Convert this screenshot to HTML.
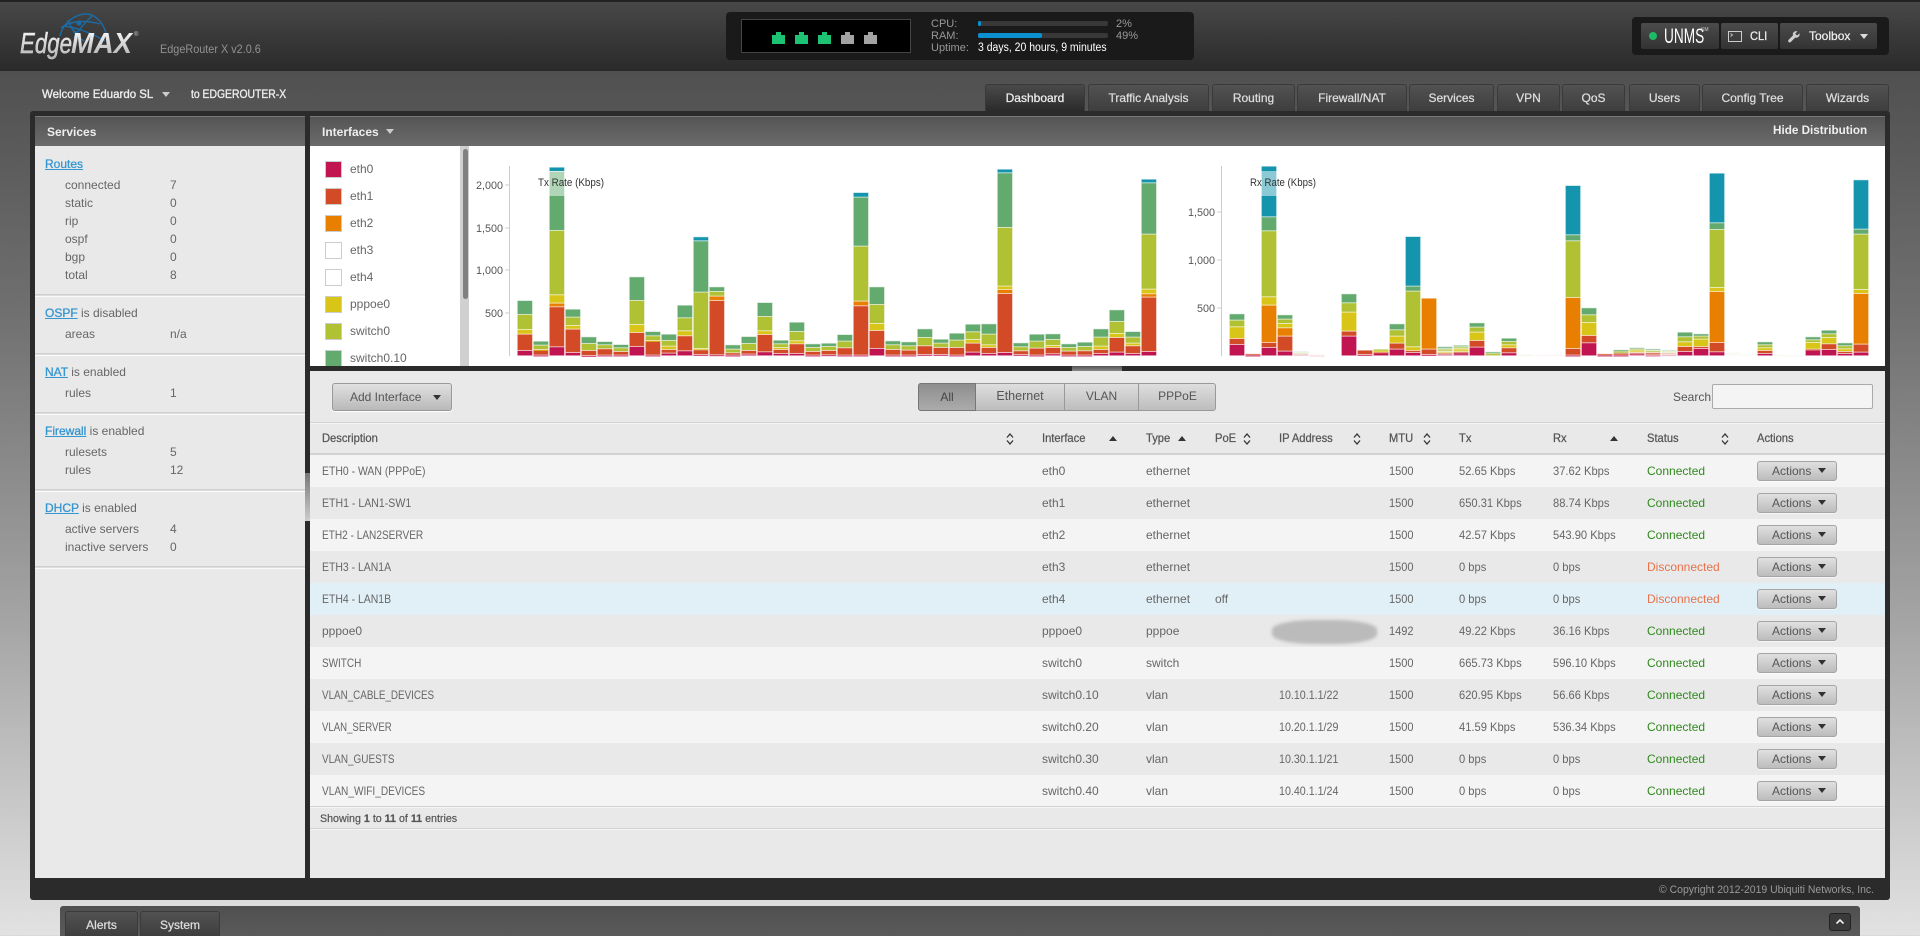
<!DOCTYPE html>
<html><head><meta charset="utf-8"><title>EdgeRouter X</title>
<style>
*{box-sizing:border-box}
html,body{margin:0;padding:0;width:1920px;height:936px;overflow:hidden}
body{position:relative;font:12px/14px "Liberation Sans",sans-serif;color:#666;background:linear-gradient(#505050 71px,#707070 312px,#a5a5a5 624px,#e2e2e2 936px)}
.a{position:absolute}
.t{position:absolute;white-space:nowrap;line-height:14px;transform-origin:0 50%}
.sb{-webkit-text-stroke:.25px}
#hd{left:0;top:0;width:1920px;height:71px;background:linear-gradient(#484848,#2a2a2a);border-top:2px solid #222}
.tab{position:absolute;top:84px;height:27px;border:1px solid #3a3a3a;border-bottom:0;border-radius:3px 3px 0 0;background:linear-gradient(#525252,#3e3e3e);color:#ddd;text-align:center;line-height:27px;-webkit-text-stroke:.25px}
.tab.on{background:linear-gradient(#4a4a4a,#2b2b2b);color:#eee}
.car{position:absolute;width:0;height:0;border:4px solid transparent;border-top:5px solid #ccc;border-bottom:0}
.car.d{border-top-color:#333}
.ph{position:absolute;top:116px;height:30px;background:linear-gradient(#555,#6b6b6b);border-top:1px solid #777;color:#eee;font-weight:bold;line-height:30px;font-size:12px}
a.l{color:#3596d0;text-decoration:underline;-webkit-text-stroke:.3px}
.dv{position:absolute;left:35px;width:270px;height:3px;border-top:1px solid #cfcfcf;border-bottom:1px solid #fafafa;background:#ddd}
.btn{position:absolute;border:1px solid #999;border-radius:3px;background:linear-gradient(#e0e0e0,#b9b9b9);color:#555;text-align:center}
.tb{position:absolute;top:23px;height:26px;background:linear-gradient(#4b4b4b,#333);border-radius:2px;color:#eee}
.r{position:absolute;left:310px;width:1575px;height:32px;line-height:33px;color:#666}
.r i{position:absolute;font-style:normal;white-space:nowrap;transform-origin:0 50%}
.r i:nth-of-type(1){left:12px}
.r i:nth-of-type(2){left:732px}
.r i:nth-of-type(3){left:836px}
.r i:nth-of-type(4){left:905px}
.r i:nth-of-type(5){left:969px;transform:scaleX(.89)}
.r i:nth-of-type(6){left:1079px;transform:scaleX(.92)}
.r i:nth-of-type(7){left:1149px;transform:scaleX(.93)}
.r i:nth-of-type(8){left:1243px;transform:scaleX(.93)}
.r i:nth-of-type(9){left:1337px}
.r i.g{color:#2f8a1e}
.r i.o{color:#e8734a}
.r b{position:absolute;left:1447px;top:6px;width:80px;height:20px;border:1px solid #a5a5a5;border-radius:3px;background:linear-gradient(#e0e0e0,#bcbcbc);font-weight:normal;line-height:19px;color:#555;padding-left:14px;box-shadow:0 1px 0 #fff8}
.r b:after{content:"";position:absolute;left:60px;top:6px;border:4px solid transparent;border-top:5px solid #333;border-bottom:0}
.hd{position:absolute;top:431px;color:#555;-webkit-text-stroke:.25px;white-space:nowrap;transform:scaleX(.93);transform-origin:0 50%}
.sw{position:absolute;left:325px;width:17px;height:17px;border:1px solid #ccc}
.up{position:absolute;top:436px;border:4px solid transparent;border-bottom:5px solid #333;border-top:0}
.so{position:absolute;top:432px;width:8px;height:14px}
</style></head><body>
<div class="a" id="hd"></div>

<svg class="a" style="left:0;top:0" width="300" height="71" viewBox="0 0 300 71">
<defs><linearGradient id="lg" x1="0" y1="0" x2="0" y2="1"><stop offset="0" stop-color="#fff"/><stop offset="1" stop-color="#aaa"/></linearGradient></defs>
<g fill="none" stroke="#1b6ba5" stroke-width="1.4">
<path d="M60 36C63 22 76 14 86 14C96 14 105 24 107 38"/>
<path d="M63 26C74 27 90 32 105 41"/>
<path d="M68 20C72 30 76 36 84 41"/>
<path d="M93 15C88 20 80 27 74 38"/>
<path d="M61 28C68 22 82 19 100 24"/>
</g>
<circle cx="79" cy="23" r="2.6" fill="#1b6ba5"/><circle cx="75" cy="32" r="1.6" fill="#1b6ba5"/>
<text x="20" y="53" font-family="Liberation Sans" font-style="italic" font-size="29" fill="url(#lg)" stroke="#ddd" stroke-width=".5" textLength="52" lengthAdjust="spacingAndGlyphs">Edge</text>
<text x="71" y="53" font-family="Liberation Sans" font-style="italic" font-weight="bold" font-size="29" fill="url(#lg)" textLength="61" lengthAdjust="spacingAndGlyphs">MAX</text>
<text x="134" y="36" font-family="Liberation Sans" font-size="6" fill="#ccc">®</text>
</svg>
<div class="t" style="left:160px;top:42px;color:#929292;transform:scaleX(.905)">EdgeRouter X v2.0.6</div>

<div class="a" style="left:726px;top:12px;width:468px;height:48px;background:#1a1a1a;border-radius:4px"></div>
<div class="a" style="left:741px;top:19px;width:170px;height:34px;background:#000;border:1px solid #444"></div>
<svg class="a" style="left:770px;top:30px" width="110" height="14" viewBox="0 0 110 14">
<g fill="#1dc273"><path d="M2 5h4V2h5v3h4v9H2z"/><path d="M25 5h4V2h5v3h4v9H25z"/><path d="M48 5h4V2h5v3h4v9H48z"/></g>
<g fill="#a3a3a3"><path d="M71 5h4V2h5v3h4v9H71z"/><path d="M94 5h4V2h5v3h4v9H94z"/></g></svg>
<div class="t" style="left:931px;top:17px;color:#999;font-size:11px">CPU:</div>
<div class="t" style="left:931px;top:29px;color:#999;font-size:11px">RAM:</div>
<div class="t" style="left:931px;top:41px;color:#999;font-size:11px">Uptime:</div>
<div class="a" style="left:978px;top:21px;width:130px;height:5px;background:#383838;border-radius:2px"><div style="width:3px;height:5px;background:#0a8fd0;border-radius:2px"></div></div>
<div class="a" style="left:978px;top:33px;width:130px;height:5px;background:#383838;border-radius:2px"><div style="width:64px;height:5px;background:#0a8fd0;border-radius:2px"></div></div>
<div class="t" style="left:1116px;top:17px;color:#999;font-size:11px">2%</div>
<div class="t" style="left:1116px;top:29px;color:#999;font-size:11px">49%</div>
<div class="t" style="left:978px;top:41px;color:#fff;font-size:11.5px;transform:scaleX(.91)">3 days, 20 hours, 9 minutes</div>

<div class="a" style="left:1632px;top:17px;width:257px;height:38px;background:#1a1a1a;border-radius:4px"></div>
<div class="tb" style="left:1641px;width:78px"></div>
<div class="tb" style="left:1721px;width:57px"></div>
<div class="tb" style="left:1780px;width:97px"></div>
<div class="a" style="left:1649px;top:32px;width:8px;height:8px;border-radius:50%;background:#1dbb65"></div>
<div class="t" style="left:1664px;top:26px;color:#fff;font-size:21px;line-height:21px;transform:scaleX(.65);transform-origin:0 0">UNMS</div>
<div class="t" style="left:1701px;top:27px;color:#ccc;font-size:5px;line-height:6px">SM</div>
<svg class="a" style="left:1728px;top:31px" width="15" height="11" viewBox="0 0 15 11"><rect x=".5" y=".5" width="13" height="10" fill="none" stroke="#ccc"/><path d="M2.5 2.5l2 1.5-2 1.5" fill="none" stroke="#ccc" stroke-width=".8"/></svg>
<div class="t" style="left:1750px;top:29px;color:#eee;-webkit-text-stroke:.25px;transform:scaleX(.92)">CLI</div>
<svg class="a" style="left:1788px;top:31px" width="12" height="12" viewBox="0 0 12 12"><path d="M11.5 2.2 9.4 4.2 7.9 3.8 7.5 2.3 9.6.4C8.2-.2 6.6.1 5.7 1.1 4.8 2 4.6 3.3 5 4.4L.6 8.8c-.6.6-.6 1.6 0 2.2.6.6 1.6.6 2.2 0L7.2 6.6c1.1.4 2.4.2 3.3-.7 1-.9 1.4-2.4 1-3.7z" fill="#ccc"/></svg>
<div class="t" style="left:1809px;top:29px;color:#eee;-webkit-text-stroke:.25px">Toolbox</div>
<div class="car" style="left:1860px;top:34px;border-top-color:#ddd"></div>

<div class="t sb" style="left:42px;top:87px;color:#eee;transform:scaleX(.955);-webkit-text-stroke:.35px">Welcome Eduardo SL</div>
<div class="car" style="left:162px;top:92px"></div>
<div class="t sb" style="left:191px;top:87px;color:#eee;transform:scaleX(.865);-webkit-text-stroke:.35px">to EDGEROUTER-X</div>

<div class="tab on" style="left:985px;width:100px">Dashboard</div>
<div class="tab" style="left:1088px;width:121px">Traffic Analysis</div>
<div class="tab" style="left:1212px;width:83px">Routing</div>
<div class="tab" style="left:1297px;width:110px">Firewall/NAT</div>
<div class="tab" style="left:1409px;width:85px">Services</div>
<div class="tab" style="left:1497px;width:63px">VPN</div>
<div class="tab" style="left:1562px;width:63px">QoS</div>
<div class="tab" style="left:1629px;width:71px">Users</div>
<div class="tab" style="left:1702px;width:101px">Config Tree</div>
<div class="tab" style="left:1806px;width:83px">Wizards</div>

<div class="a" style="left:30px;top:111px;width:1860px;height:789px;background:#2b2b2b;border-radius:3px"></div>

<div class="a" style="left:35px;top:146px;width:270px;height:732px;background:#e9e9e9"></div>
<div class="a" style="left:310px;top:146px;width:1575px;height:220px;background:#fff"></div>
<div class="a" style="left:310px;top:371px;width:1575px;height:507px;background:#e9e9e9"></div>
<div class="a" style="left:305px;top:473px;width:5px;height:48px;background:linear-gradient(#777,#ccc)"></div>
<div class="a" style="left:1072px;top:366px;width:50px;height:5px;background:linear-gradient(#555,#888)"></div>

<div class="ph" style="left:35px;width:270px;padding-left:12px">Services</div>
<div class="ph" style="left:310px;width:1575px;padding-left:12px">Interfaces</div>
<div class="car" style="left:386px;top:129px"></div>
<div class="t" style="left:1773px;top:124px;color:#eee;font-weight:bold;font-size:11.7px">Hide Distribution</div>

<!-- Left panel -->
<div class="t" style="left:45px;top:157px"><a class="l">Routes</a></div>
<div class="t" style="left:65px;top:178px">connected</div><div class="t" style="left:170px;top:178px">7</div>
<div class="t" style="left:65px;top:196px">static</div><div class="t" style="left:170px;top:196px">0</div>
<div class="t" style="left:65px;top:214px">rip</div><div class="t" style="left:170px;top:214px">0</div>
<div class="t" style="left:65px;top:232px">ospf</div><div class="t" style="left:170px;top:232px">0</div>
<div class="t" style="left:65px;top:250px">bgp</div><div class="t" style="left:170px;top:250px">0</div>
<div class="t" style="left:65px;top:268px">total</div><div class="t" style="left:170px;top:268px">8</div>
<div class="dv" style="top:294px"></div>
<div class="t" style="left:45px;top:306px"><a class="l">OSPF</a> is disabled</div>
<div class="t" style="left:65px;top:327px">areas</div><div class="t" style="left:170px;top:327px">n/a</div>
<div class="dv" style="top:353px"></div>
<div class="t" style="left:45px;top:365px"><a class="l">NAT</a> is enabled</div>
<div class="t" style="left:65px;top:386px">rules</div><div class="t" style="left:170px;top:386px">1</div>
<div class="dv" style="top:412px"></div>
<div class="t" style="left:45px;top:424px"><a class="l">Firewall</a> is enabled</div>
<div class="t" style="left:65px;top:445px">rulesets</div><div class="t" style="left:170px;top:445px">5</div>
<div class="t" style="left:65px;top:463px">rules</div><div class="t" style="left:170px;top:463px">12</div>
<div class="dv" style="top:489px"></div>
<div class="t" style="left:45px;top:501px"><a class="l">DHCP</a> is enabled</div>
<div class="t" style="left:65px;top:522px">active servers</div><div class="t" style="left:170px;top:522px">4</div>
<div class="t" style="left:65px;top:540px">inactive servers</div><div class="t" style="left:170px;top:540px">0</div>
<div class="dv" style="top:566px"></div>

<!-- Legend -->
<div class="a" style="left:310px;top:146px;width:159px;height:220px;overflow:hidden">
<div class="sw" style="left:15px;top:15px;background:#c01550"></div><div class="t" style="left:40px;top:16px">eth0</div>
<div class="sw" style="left:15px;top:42px;background:#d34a26"></div><div class="t" style="left:40px;top:43px">eth1</div>
<div class="sw" style="left:15px;top:69px;background:#e97f00"></div><div class="t" style="left:40px;top:70px">eth2</div>
<div class="sw" style="left:15px;top:96px;background:#fff"></div><div class="t" style="left:40px;top:97px">eth3</div>
<div class="sw" style="left:15px;top:123px;background:#fff"></div><div class="t" style="left:40px;top:124px">eth4</div>
<div class="sw" style="left:15px;top:150px;background:#d8c518"></div><div class="t" style="left:40px;top:151px">pppoe0</div>
<div class="sw" style="left:15px;top:177px;background:#b0c134"></div><div class="t" style="left:40px;top:178px">switch0</div>
<div class="sw" style="left:15px;top:204px;background:#63aa6f"></div><div class="t" style="left:40px;top:205px">switch0.10</div>
</div>
<div class="a" style="left:460px;top:146px;width:9px;height:220px;background:#d0d0d0"><div style="margin:3px 0 0 2.5px;width:5px;height:150px;background:#808080;border-radius:3px"></div></div>

<!-- Charts -->
<svg class="a" id="ch" style="left:0;top:0" width="1920" height="370" viewBox="0 0 1920 370" font-family="Liberation Sans" font-size="10.8">
<g id="bars"></g>
<rect x="537" y="171" width="68" height="25" fill="#fff" fill-opacity=".5"/>
<rect x="1250" y="171" width="67" height="25" fill="#fff" fill-opacity=".5"/>
<path d="M509.5 166V356M505 185h4M505 228h4M505 270h4M505 313h4M1221.5 166V356M1217 212h4M1217 260h4M1217 308h4" stroke="#ccc" fill="none"/>
<g fill="#555" text-anchor="end">
<text x="503" y="189">2,000</text><text x="503" y="232">1,500</text><text x="503" y="274">1,000</text><text x="503" y="317">500</text>
<text x="1215" y="216">1,500</text><text x="1215" y="264">1,000</text><text x="1215" y="312">500</text>
</g>
<text x="538" y="186" fill="#333" font-size="11" textLength="66" lengthAdjust="spacingAndGlyphs">Tx Rate (Kbps)</text>
<text x="1250" y="186" fill="#333" font-size="11" textLength="66" lengthAdjust="spacingAndGlyphs">Rx Rate (Kbps)</text>
</svg>
<script>
(function(){
var C=['#c01550','#d34a26','#e97f00','#d8c518','#b0c134','#63aa6f','#1594ad'];
var T=[[16,49,0,14,45,42],[2,16,0,1,13,12],[27,120,11,25,193,177,13],[10,70,0,11,25,24],[1,15,0,0,21,20],[2,19,0,0,12,10],[2,11,0,0,11,10],[28,42,0,24,72,71],[2,43,0,1,14,13],[8,11,0,10,17,19],[15,45,0,15,39,38],[4,14,0,4,169,154,12],[3,163,13,0,14,14],[2,7,0,0,11,13],[5,11,0,0,21,21],[12,52,0,11,43,42],[7,12,0,6,11,11],[7,29,0,9,28,28],[2,11,0,0,12,11],[3,13,0,0,12,10],[2,22,0,0,20,20],[2,148,14,0,165,147,14],[22,54,0,21,57,53],[2,17,0,0,14,12],[2,15,0,0,13,12],[4,26,0,0,25,26],[4,21,0,0,13,12],[2,23,0,0,22,21],[11,27,0,11,23,23],[7,18,0,8,32,31],[10,177,12,10,176,164,11],[4,11,0,0,12,12],[2,21,0,0,21,21],[6,19,0,6,18,17],[2,12,0,0,11,11],[2,13,0,0,13,13],[7,12,0,10,27,25],[11,44,0,12,36,35],[7,23,0,8,18,17],[13,163,10,14,165,154,11]];
var R=[[34,18,0,35,20,19],[2,4],[25,15,112,25,198,42,152],[14,45,25,13,13,13],[4,3,0,0,3,4,0,.25],[1,3,0,0,0,0,0,.12],[],[59,15,0,57,28,27],[4,13],[9,2,0,6,3],[20,18,0,21,19,18],[10,6,0,11,167,15,149],[4,16,153],[5,4,0,4,8,7,0,.7],[10,2,0,9,6,5,0,.8],[26,20,0,25,15,13],[0,0,0,0,8,4,0,.9],[9,15,0,9,10,10],[0,0,0,0,3,2,0,.08],[0,3,0,0,0,0,0,.06],[0,4,0,0,0,0,0,.08],[2,20,153,0,170,18,148],[39,22,0,39,23,21],[2,4],[2,6,0,0,6,4],[7,3,0,8,3,4,0,.7],[2,8,0,0,6,5,0,.7],[3,6,0,0,5,4,0,.35],[13,15,0,14,15,14],[22,6,0,22,9,7],[12,28,153,12,174,20,149],[0,0,0,0,5,5,0,.08],[0,0,0,0,3,3,0,.05],[7,9,0,8,9,9],[0,0,0,0,2,2,0,.05],[0,0,0,0,1,1,0,.05],[17,3,0,20,8,9],[19,17,0,19,11,11],[7,6,0,8,9,9],[11,24,152,12,166,15,148]];
var s='';
function d(D,x0){D.forEach(function(b,k){var y=355.8,x=x0+16*k,op=b[7]||1;
for(var i=0;i<7;i++){var h=(b[i]||0)/3;if(!h)continue;y-=h;
s+='<rect x="'+(x+.5)+'" y="'+(y+.5).toFixed(2)+'" width="14.4" height="'+Math.max(h-1,.6).toFixed(2)+'" fill="'+C[i]+'" stroke="'+C[i]+'" stroke-opacity=".35" style="opacity:'+op+'"/>';}
});}
d(T,517.2);d(R,1229.3);
document.getElementById('bars').innerHTML=s;
})();
</script>

<!-- Toolbar -->
<div class="btn" style="left:332px;top:383px;width:120px;height:28px;line-height:27px;text-align:left;padding-left:17px;box-shadow:0 1px 1px #fff">Add Interface</div>
<div class="car d" style="left:433px;top:395px"></div>
<div class="a" style="left:918px;top:383px;width:298px;height:28px;border:1px solid #999;border-radius:3px;background:linear-gradient(#dedede,#bdbdbd)"></div>
<div class="a" style="left:918px;top:383px;width:58px;height:28px;border:1px solid #777;border-radius:3px 0 0 3px;background:linear-gradient(#8e8e8e,#ababab);color:#444;text-align:center;line-height:27px">All</div>
<div class="a" style="left:976px;top:384px;width:89px;height:26px;border-right:1px solid #999;color:#555;text-align:center;line-height:25px;font-size:12.5px">Ethernet</div>
<div class="a" style="left:1065px;top:384px;width:74px;height:26px;border-right:1px solid #999;color:#555;text-align:center;line-height:25px">VLAN</div>
<div class="a" style="left:1139px;top:384px;width:77px;height:26px;color:#555;text-align:center;line-height:25px">PPPoE</div>
<div class="t" style="left:1673px;top:390px;color:#555">Search</div>
<div class="a" style="left:1712px;top:384px;width:161px;height:25px;background:#f4f4f4;border:1px solid #aaa;border-radius:2px"></div>

<div class="a" style="left:310px;top:422px;width:1575px;height:2px;background:#d2d2d2;border-bottom:1px solid #f5f5f5"></div>
<div class="a" style="left:310px;top:453px;width:1575px;height:2px;background:#d2d2d2"></div>

<div class="hd" style="left:322px">Description</div>
<div class="hd" style="left:1042px">Interface</div>
<div class="hd" style="left:1146px">Type</div>
<div class="hd" style="left:1215px">PoE</div>
<div class="hd" style="left:1279px">IP Address</div>
<div class="hd" style="left:1389px">MTU</div>
<div class="hd" style="left:1459px">Tx</div>
<div class="hd" style="left:1553px">Rx</div>
<div class="hd" style="left:1647px">Status</div>
<div class="hd" style="left:1757px">Actions</div>
<div class="up" style="left:1109px"></div><div class="up" style="left:1178px"></div><div class="up" style="left:1610px"></div>
<svg class="so" style="left:1006px" viewBox="0 0 8 14"><path d="M1 5.5 4 2l3 3.5M1 8.5 4 12l3-3.5" fill="none" stroke="#333" stroke-width="1.3"/></svg>
<svg class="so" style="left:1243px" viewBox="0 0 8 14"><path d="M1 5.5 4 2l3 3.5M1 8.5 4 12l3-3.5" fill="none" stroke="#333" stroke-width="1.3"/></svg>
<svg class="so" style="left:1353px" viewBox="0 0 8 14"><path d="M1 5.5 4 2l3 3.5M1 8.5 4 12l3-3.5" fill="none" stroke="#333" stroke-width="1.3"/></svg>
<svg class="so" style="left:1423px" viewBox="0 0 8 14"><path d="M1 5.5 4 2l3 3.5M1 8.5 4 12l3-3.5" fill="none" stroke="#333" stroke-width="1.3"/></svg>
<svg class="so" style="left:1721px" viewBox="0 0 8 14"><path d="M1 5.5 4 2l3 3.5M1 8.5 4 12l3-3.5" fill="none" stroke="#333" stroke-width="1.3"/></svg>

<!-- Rows -->
<div class="r" style="top:455px;background:#f4f4f4"><i style="transform:scaleX(.87)">ETH0 - WAN (PPPoE)</i><i>eth0</i><i>ethernet</i><i></i><i></i><i>1500</i><i>52.65 Kbps</i><i>37.62 Kbps</i><i class="g">Connected</i><b>Actions</b></div>
<div class="r" style="top:487px;background:#e9e9e9"><i style="transform:scaleX(.88)">ETH1 - LAN1-SW1</i><i>eth1</i><i>ethernet</i><i></i><i></i><i>1500</i><i>650.31 Kbps</i><i>88.74 Kbps</i><i class="g">Connected</i><b>Actions</b></div>
<div class="r" style="top:519px;background:#f4f4f4"><i style="transform:scaleX(.84)">ETH2 - LAN2SERVER</i><i>eth2</i><i>ethernet</i><i></i><i></i><i>1500</i><i>42.57 Kbps</i><i>543.90 Kbps</i><i class="g">Connected</i><b>Actions</b></div>
<div class="r" style="top:551px;background:#e9e9e9"><i style="transform:scaleX(.87)">ETH3 - LAN1A</i><i>eth3</i><i>ethernet</i><i></i><i></i><i>1500</i><i>0 bps</i><i>0 bps</i><i class="o">Disconnected</i><b>Actions</b></div>
<div class="r" style="top:583px;background:#e1eff6"><i style="transform:scaleX(.87)">ETH4 - LAN1B</i><i>eth4</i><i>ethernet</i><i>off</i><i></i><i>1500</i><i>0 bps</i><i>0 bps</i><i class="o">Disconnected</i><b>Actions</b></div>
<div class="r" style="top:615px;background:#e9e9e9"><i>pppoe0</i><i>pppoe0</i><i>pppoe</i><i></i><i></i><i>1492</i><i>49.22 Kbps</i><i>36.16 Kbps</i><i class="g">Connected</i><b>Actions</b></div>
<div class="r" style="top:647px;background:#f4f4f4"><i style="transform:scaleX(.83)">SWITCH</i><i>switch0</i><i>switch</i><i></i><i></i><i>1500</i><i>665.73 Kbps</i><i>596.10 Kbps</i><i class="g">Connected</i><b>Actions</b></div>
<div class="r" style="top:679px;background:#e9e9e9"><i style="transform:scaleX(.82)">VLAN_CABLE_DEVICES</i><i>switch0.10</i><i>vlan</i><i></i><i>10.10.1.1/22</i><i>1500</i><i>620.95 Kbps</i><i>56.66 Kbps</i><i class="g">Connected</i><b>Actions</b></div>
<div class="r" style="top:711px;background:#f4f4f4"><i style="transform:scaleX(.8)">VLAN_SERVER</i><i>switch0.20</i><i>vlan</i><i></i><i>10.20.1.1/29</i><i>1500</i><i>41.59 Kbps</i><i>536.34 Kbps</i><i class="g">Connected</i><b>Actions</b></div>
<div class="r" style="top:743px;background:#e9e9e9"><i style="transform:scaleX(.83)">VLAN_GUESTS</i><i>switch0.30</i><i>vlan</i><i></i><i>10.30.1.1/21</i><i>1500</i><i>0 bps</i><i>0 bps</i><i class="g">Connected</i><b>Actions</b></div>
<div class="r" style="top:775px;background:#f4f4f4"><i style="transform:scaleX(.84)">VLAN_WIFI_DEVICES</i><i>switch0.40</i><i>vlan</i><i></i><i>10.40.1.1/24</i><i>1500</i><i>0 bps</i><i>0 bps</i><i class="g">Connected</i><b>Actions</b></div>

<div class="a" style="left:1272px;top:620px;width:105px;height:24px;background:#bbb;border-radius:40%;filter:blur(1.5px)"></div>

<div class="a" style="left:310px;top:806px;width:1575px;height:2px;background:#d2d2d2;border-bottom:1px solid #f5f5f5"></div>
<div class="t" style="left:320px;top:812px;font-size:11px;color:#555;-webkit-text-stroke:.2px;transform:scaleX(.97)">Showing <b>1</b> to <b>11</b> of <b>11</b> entries</div>
<div class="a" style="left:310px;top:828px;width:1575px;height:2px;background:#d2d2d2;border-bottom:1px solid #f5f5f5"></div>

<div class="t" style="left:1659px;top:883px;color:#999;font-size:11px;transform:scaleX(.95)">© Copyright 2012-2019 Ubiquiti Networks, Inc.</div>

<!-- Bottom bar -->
<div class="a" style="left:60px;top:906px;width:1800px;height:30px;background:linear-gradient(#4f4f4f,#5a5a5a);border-radius:3px 3px 0 0"></div>
<div class="tab" style="left:65px;top:911px;width:73px;height:25px;line-height:26px">Alerts</div>
<div class="tab" style="left:140px;top:911px;width:80px;height:25px;line-height:26px">System</div>
<div class="a" style="left:1829px;top:913px;width:22px;height:18px;background:#3a3a3a;border:1px solid #222;border-radius:3px"></div>
<svg class="a" style="left:1835px;top:918px" width="10" height="8" viewBox="0 0 10 8"><path d="M1.5 5.5 5 2l3.5 3.5" fill="none" stroke="#eee" stroke-width="1.6"/></svg>
</body></html>
